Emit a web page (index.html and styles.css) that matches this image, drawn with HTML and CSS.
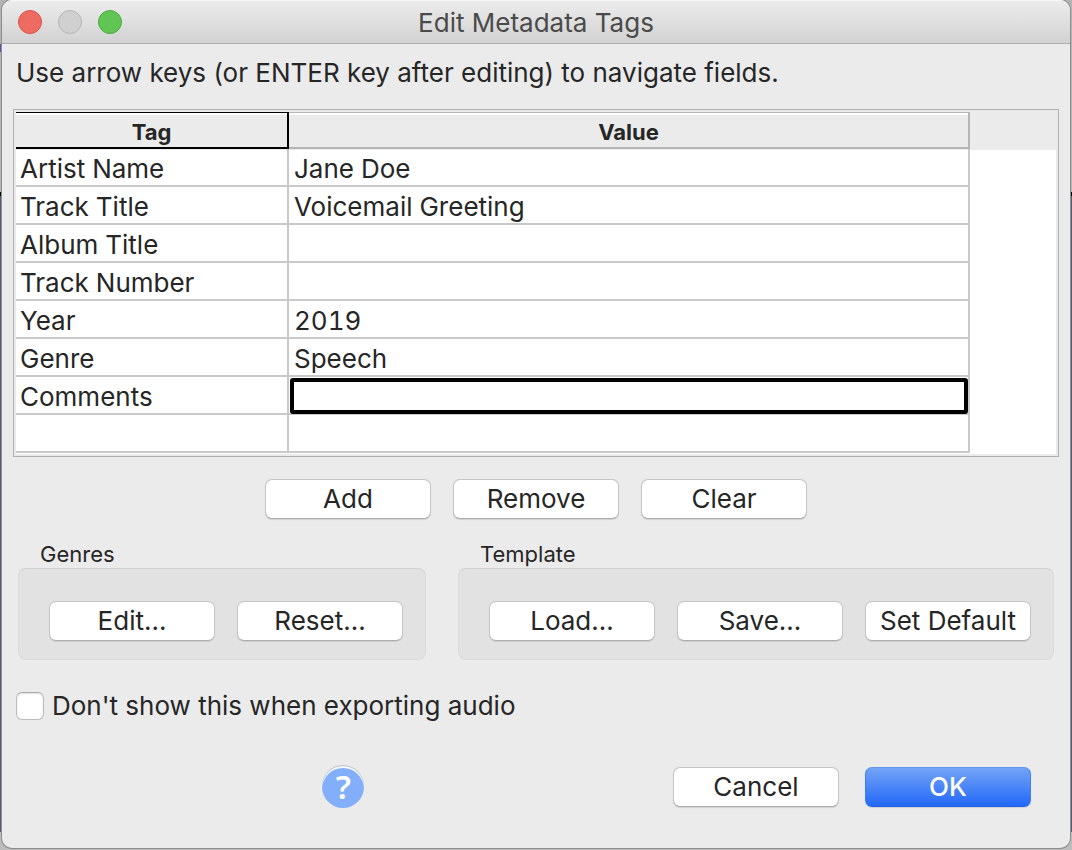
FILE: index.html
```
<!DOCTYPE html>
<html lang="en">
<head>
<meta charset="utf-8">
<meta name="viewport" content="width=device-width, initial-scale=1">
<title>Edit Metadata Tags</title>
<link rel="stylesheet" href="styles.css">
</head>
<body>
<main class="window">
  <header class="titlebar">
    <div class="lights">
      <button class="light light-close" type="button" aria-label="Close"></button>
      <button class="light light-minimize" type="button" aria-label="Minimize" disabled></button>
      <button class="light light-zoom" type="button" aria-label="Zoom"></button>
    </div>
    <h1 class="title">Edit Metadata Tags</h1>
  </header>
  <form class="content">
    <p class="hint">Use arrow keys (or ENTER key after editing) to navigate fields.</p>
    <div class="grid-frame">
      <div class="grid-area">
        <table class="tags">
          <thead>
            <tr><th class="tag-col current" scope="col">Tag</th><th scope="col">Value</th></tr>
          </thead>
          <tbody>
            <tr><td>Artist Name</td><td>Jane Doe</td></tr>
            <tr><td>Track Title</td><td>Voicemail Greeting</td></tr>
            <tr><td>Album Title</td><td></td></tr>
            <tr><td>Track Number</td><td></td></tr>
            <tr><td>Year</td><td>2019</td></tr>
            <tr><td>Genre</td><td>Speech</td></tr>
            <tr><td>Comments</td><td class="cursor" tabindex="0"></td></tr>
            <tr><td></td><td></td></tr>
          </tbody>
        </table>
      </div>
    </div>
    <div class="row-actions">
      <button class="btn" type="button">Add</button>
      <button class="btn" type="button">Remove</button>
      <button class="btn" type="button">Clear</button>
    </div>
    <div class="groups">
      <section class="group" aria-labelledby="genres-label">
        <h2 class="group-label" id="genres-label">Genres</h2>
        <div class="group-box">
          <button class="btn" type="button">Edit...</button>
          <button class="btn" type="button">Reset...</button>
        </div>
      </section>
      <section class="group group-wide" aria-labelledby="template-label">
        <h2 class="group-label" id="template-label">Template</h2>
        <div class="group-box">
          <button class="btn" type="button">Load...</button>
          <button class="btn" type="button">Save...</button>
          <button class="btn" type="button">Set Default</button>
        </div>
      </section>
    </div>
    <div class="option">
      <input class="check" type="checkbox" id="skip">
      <label for="skip">Don't show this when exporting audio</label>
    </div>
    <footer class="footer">
      <button class="help" type="button" aria-label="Help">?</button>
      <div class="dialog-actions">
        <button class="btn" type="button">Cancel</button>
        <button class="btn btn-primary" type="submit">OK</button>
      </div>
    </footer>
  </form>
</main>
</body>
</html>
```
FILE: styles.css
```
* {
  box-sizing: border-box;
}

body {
  margin: 0;
  min-height: 100vh;
  padding: 0 2px 2px;
  display: flex;
  font-family: Inter, "Liberation Sans", sans-serif;
  font-size: 26px;
  line-height: 30px;
  color: #262626;
  background:
    linear-gradient(#4a55b8, #4a55b8) 0 44px / 2px 8px no-repeat,
    linear-gradient(#b4b4b4 0 192px, #000 192px 196px, #565b76 196px 832px, #bdbdbd 832px);
}

.window {
  flex: 1;
  display: flex;
  flex-direction: column;
  background: #ebebeb;
  border-radius: 10px;
  box-shadow: 0 0 0 1px #8e8e8e;
  overflow: hidden;
}

.titlebar {
  display: grid;
  grid-template-columns: 1fr auto 1fr;
  align-items: center;
  height: 44px;
  padding: 0 16px;
  background: linear-gradient(#ececec, #d2d2d2);
  border-top: 1px solid #f8f8f8;
  border-bottom: 1px solid #adadad;
}

.lights {
  display: flex;
  gap: 16px;
}

.light {
  width: 24px;
  height: 24px;
  padding: 0;
  border: 1px solid;
  border-radius: 50%;
}

.light-close {
  background: #ed6b60;
  border-color: #d9534a;
}

.light-minimize {
  background: #d0d0d0;
  border-color: #b4b4b4;
}

.light-zoom {
  background: #61c554;
  border-color: #4cab3f;
}

.title {
  margin: 0;
  padding-top: 2px;
  font-size: 26px;
  font-weight: 400;
  color: #4a4a4a;
}

.hint {
  margin: 14px 14px 21px;
}

.grid-frame {
  margin: 0 11px;
  padding: 2px;
  border: 1px solid #b0b0b0;
}

.grid-area {
  padding: 0 86px 1px 0;
  background: linear-gradient(#ebebeb 38px, #fff 38px);
}

.tags {
  width: 100%;
  table-layout: fixed;
  border-collapse: separate;
  border-spacing: 0;
}

.tags th,
.tags td {
  height: 38px;
  padding: 4px 4px 0;
  border-right: 2px solid #c9c9c9;
  border-bottom: 2px solid #c9c9c9;
  text-align: left;
  font-variant-numeric: tabular-nums;
}

.tags td + td {
  padding-left: 5px;
}

.tags th {
  height: 37px;
  padding: 4px 2px 0;
  background: #ebebeb;
  border-top: 1px solid #b5b5b5;
  border-color: #b5b5b5;
  box-shadow: inset 0 2px #fff;
  text-align: center;
  font-size: 22px;
  line-height: 28px;
  font-weight: 700;
}

.tags .tag-col {
  width: 273px;
}

.tags .current {
  border-color: #000;
}

.tags .cursor {
  position: relative;
  outline: none;
}

.cursor::after {
  content: "";
  position: absolute;
  inset: 1px 0 -1px 1px;
  border: 4px solid #000;
  border-radius: 3px;
}

.row-actions {
  display: flex;
  justify-content: center;
  gap: 22px;
  margin-top: 22px;
}

.btn {
  width: 166px;
  height: 40px;
  padding: 0;
  border: 1px solid #c4c4c4;
  border-bottom-color: #acacac;
  border-radius: 7px;
  background: #fff;
  box-shadow: 0 1px 1px #d0d0d0;
  color: #262626;
  font: inherit;
  white-space: nowrap;
}

.btn-primary {
  border-color: #5f96f3 #3f7ef3 #1f63f0;
  background: linear-gradient(#74a3f6, #2369f8);
  color: #fff;
  font-weight: 500;
}

.groups {
  display: flex;
  gap: 32px;
  margin: 22px 16px 0;
}

.group-wide {
  flex: 1;
}

.group-label {
  margin: 0;
  padding-left: 22px;
  font-size: 22px;
  line-height: 27px;
  font-weight: 400;
}

.group-box {
  display: flex;
  gap: 22px;
  padding: 32px 22px 18px 30px;
  background: #e2e2e2;
  border: 1px solid #dadada;
  border-top-color: #d0d0d0;
  border-radius: 8px;
}

.option {
  display: flex;
  align-items: center;
  gap: 8px;
  margin: 31px 14px 0;
}

.check {
  appearance: none;
  width: 28px;
  height: 28px;
  margin: 0;
  border: 1px solid #bcbcbc;
  border-top-color: #a8a8a8;
  border-radius: 6px;
  background: #fff;
  box-shadow: inset 0 1px 2px #e0e0e0;
}

.footer {
  display: flex;
  justify-content: space-between;
  align-items: center;
  margin: 45px 39px 38px 30%;
}

.help {
  width: 42px;
  height: 42px;
  padding: 0;
  border: 0;
  border-radius: 50%;
  background: #83affa;
  box-shadow: inset 0 2px #f8f8f8, 0 -1px #c4c4c4;
  color: #fff;
  font: 600 33px/42px "Noto Sans", sans-serif;
}

.dialog-actions {
  display: flex;
  gap: 26px;
}
```
